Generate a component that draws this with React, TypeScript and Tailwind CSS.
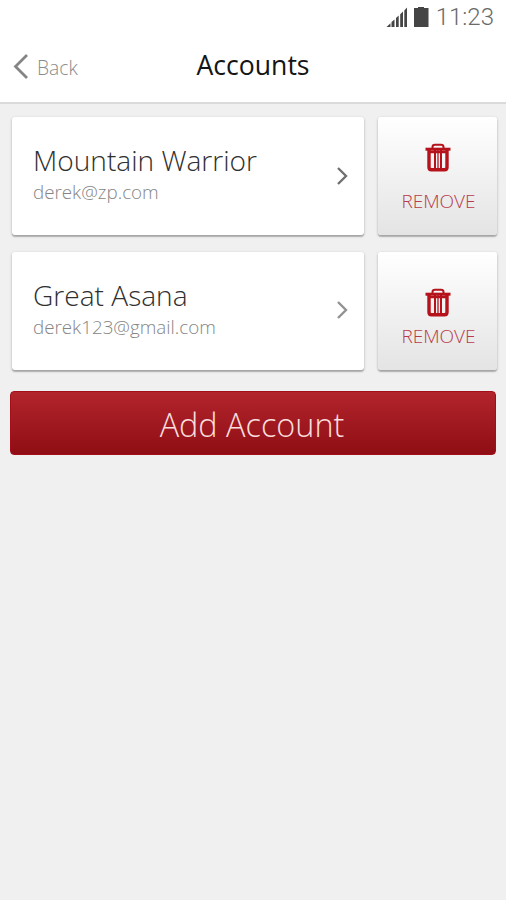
type Account = {
  name: string;
  email: string;
  chevron: string;
  chevronLift: string;
  trashGap: string;
};

const accounts: Account[] = [
  { name: "Mountain Warrior", email: "derek@zp.com", chevron: "#707070", chevronLift: "pt-0", trashGap: "pt-[26px] gap-[16px]" },
  { name: "Great Asana", email: "derek123@gmail.com", chevron: "#929292", chevronLift: "pb-[3px]", trashGap: "pt-[36px] gap-[6px]" },
];

const CARD_SHADOW =
  "rounded-[3px] shadow-[0_2px_1px_0_rgba(0,0,0,0.18),0_1px_3px_0_rgba(0,0,0,0.24)]";

function StatusBar() {
  return (
    <div className="flex h-9 items-start justify-end pr-[12px]">
      <svg className="mt-[7px] block" width="44" height="22" viewBox="0 0 44 22" fill="#454545">
        <path d="M0.5 20 L4.5 16.3 V20Z M5.5 15 L8.5 12.5 V20 H5.5Z M10 11 L12.7 8.6 V20 H10Z M14.2 7.2 L17 4.6 V20 H14.2Z M18.3 3.4 L21 0.5 V20 H18.3Z" />
        <path d="M32 0 H38 V1 H42.5 V20 H28 V1 H32Z" />
      </svg>
      <span className="mt-[4px] ml-[6px] font-[Roboto] text-[24px] leading-[26px] font-light text-[#6a6a6a]">11:23</span>
    </div>
  );
}

function Header() {
  return (
    <header className="grid h-[66px] grid-cols-[1fr_auto_1fr] items-start">
      <button className="flex items-start pl-[13px] text-[#8b8b8b]">
        <svg className="mt-[18px] block" width="16" height="25" viewBox="0 0 16 25" fill="none" stroke="#858585" strokeWidth="2.8">
          <path d="M14 1 L2.5 12.5 L14 24" />
        </svg>
        <span className="mt-[19px] ml-[8px] text-[19.3px] leading-[26px] font-light">Back</span>
      </button>
      <h1 className="mt-[12px] text-[26.6px] leading-[34px] font-normal text-[#151515]">Accounts</h1>
    </header>
  );
}

function TrashIcon() {
  return (
    <svg className="ml-px block" width="26" height="29" viewBox="0 0 26 29" fill="none" stroke="#b5121b">
      <path d="M7.5 5 V4 Q7.5 1.7 10 1.7 H16 Q18.5 1.7 18.5 4 V5" strokeWidth="2" />
      <path d="M0.5 6.2 H25.5" strokeWidth="3" />
      <path d="M4 7 V24.2 Q4 26.7 6.5 26.7 H19.5 Q22 26.7 22 24.2 V7" strokeWidth="3.4" />
      <path d="M10 7 V26 M16 7 V26" strokeWidth="2" />
      <path d="M13 7 V26" strokeWidth="1.3" />
      <path d="M5 9 H21" strokeWidth="2.5" />
    </svg>
  );
}

function AccountRow({ account }: { account: Account }) {
  return (
    <li className="flex h-[118px] gap-[14px]">
      <div className={`flex w-[352px] items-center justify-between bg-white pr-[16px] pl-[21px] ${CARD_SHADOW}`}>
        <div className="h-full pt-[24px] font-light">
          <p className="text-[28.1px] leading-[38px] text-[#303030]">{account.name}</p>
          <p className="text-[18.8px] leading-[26px] text-[#858585]">{account.email}</p>
        </div>
        <div className={account.chevronLift}>
          <svg className="block" width="11" height="18" viewBox="0 0 11 18" fill="none" stroke={account.chevron} strokeWidth="2.4">
            <path d="M1 1 L9 9 L1 17" />
          </svg>
        </div>
      </div>
      <button className={`flex w-[119px] flex-col items-center bg-linear-to-b from-white to-[#e4e4e4] ${account.trashGap} ${CARD_SHADOW}`}>
        <TrashIcon />
        <span className="ml-[2px] text-[19px] leading-[26px] font-light text-[#b73b49]">REMOVE</span>
      </button>
    </li>
  );
}

export default function App() {
  return (
    <div className="min-h-screen bg-[#f0f0f0] font-['Open_Sans',sans-serif]">
      <div className="h-[104px] border-b-2 border-[#dadada] bg-white">
        <StatusBar />
        <Header />
      </div>
      <main className="pt-[13px]">
        <ul className="flex flex-col gap-[17px] pl-[12px]">
          {accounts.map((account) => (
            <AccountRow key={account.email} account={account} />
          ))}
        </ul>
        <button className="mt-[21px] ml-[10px] flex h-[64px] w-[486px] items-center justify-center rounded-[4px] border border-[#a20f19] bg-linear-to-b from-[#b3242c] to-[#8f0d14] pt-[3px] pr-[2px] text-[32.4px] font-light text-[#f9dedd]">
          Add Account
        </button>
      </main>
    </div>
  );
}
